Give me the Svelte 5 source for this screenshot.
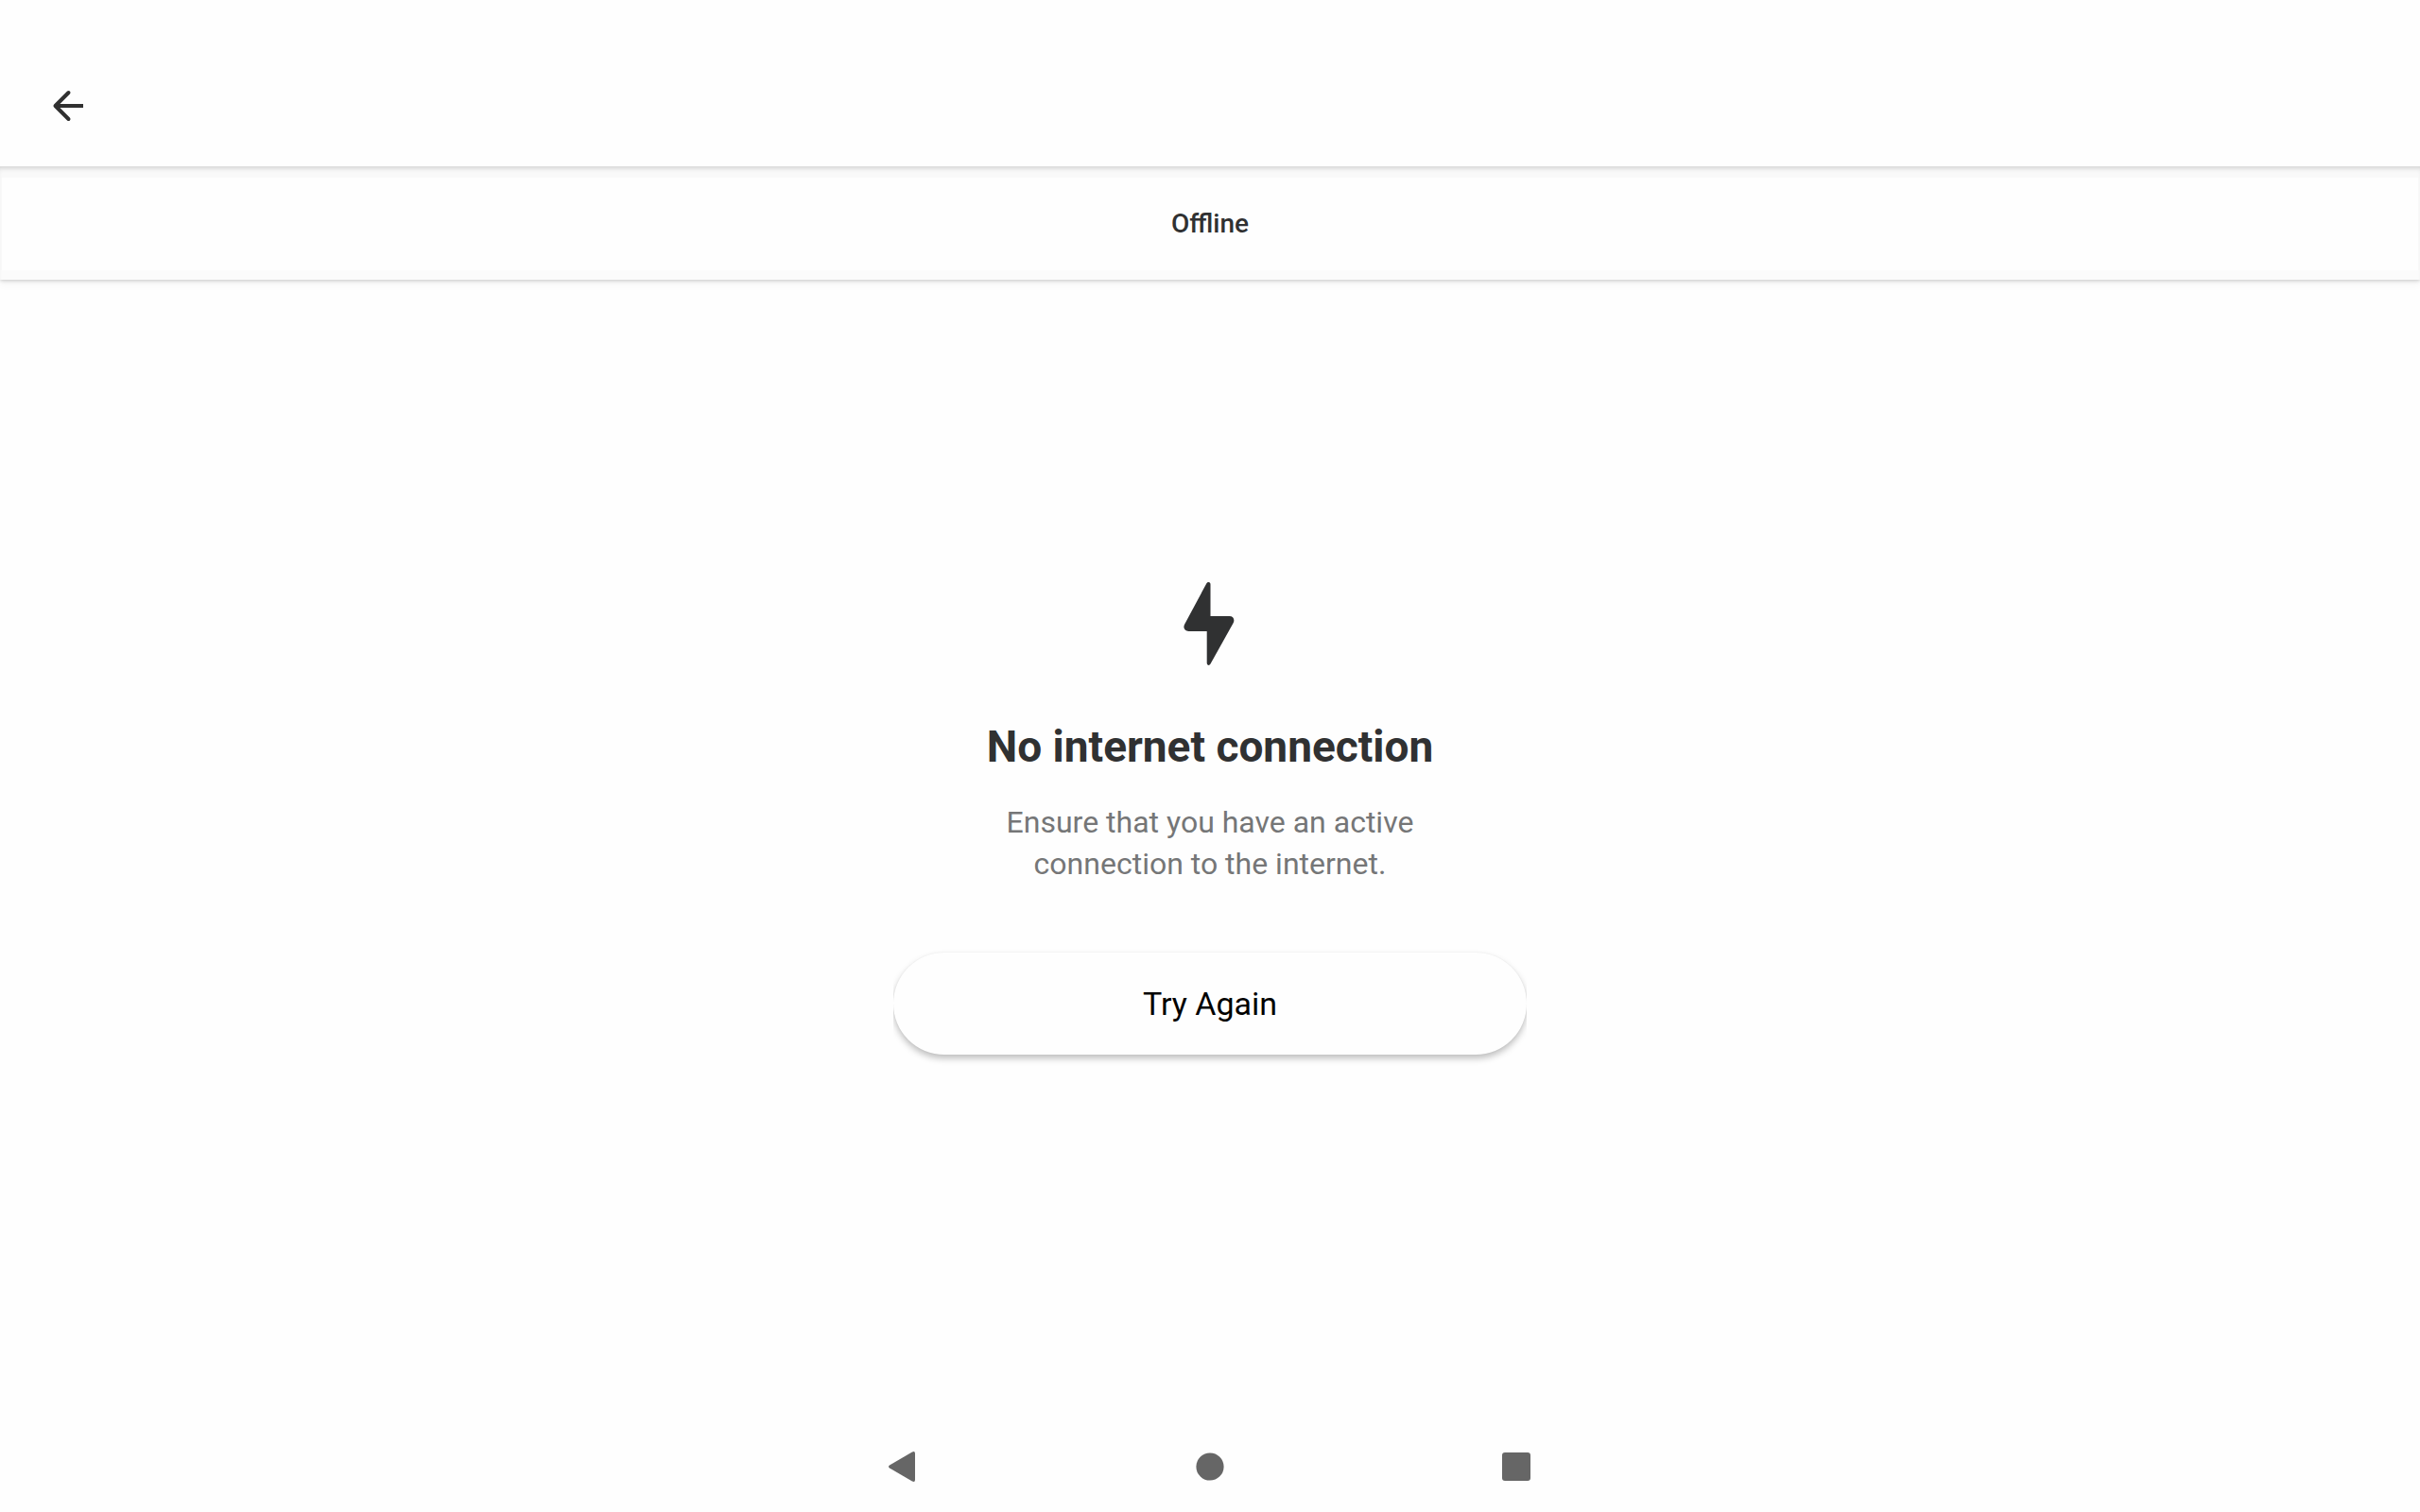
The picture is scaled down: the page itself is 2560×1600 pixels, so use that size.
<script>
  let { title = 'Offline' } = $props();
</script>

<div class="screen">
  <header class="toolbar">
    <button class="icon-button" type="button" aria-label="Back">
      <svg width="48" height="48" viewBox="0 0 48 48" fill="none" stroke="#303030" stroke-width="4">
        <path d="M40 24H11" />
        <path d="M24.500 10L10.500 24L24.500 38" stroke-linecap="round" stroke-linejoin="round" />
      </svg>
    </button>
  </header>

  <div class="banner">{title}</div>

  <main class="content">
    <svg class="bolt" width="56" height="88" viewBox="0 0 56 88" fill="#303132">
      <path d="M24.4 1.2C25.6 -.8 28.500 -.2 28.500 2.400V36H48.500C53 36 54.500 40 52.500 43.500L28.500 86.600C27.300 88.800 24.700 88 24.700 85.600V52H5.500C1 52 -.8 48 1.200 44.400Z" />
    </svg>
    <h1>No internet connection</h1>
    <p>Ensure that you have an active connection to the internet.</p>
    <div class="action">
      <button class="retry" type="button">Try Again</button>
    </div>
  </main>

  <nav class="system-bar">
    <button type="button" aria-label="System back">
      <svg width="32" height="32" viewBox="0 0 32 32" fill="#666">
        <path d="M25 .5Q28 -.8 28 2V30Q28 32.800 25 31.500L1 17.500Q-1 16 1 14.500Z" />
      </svg>
    </button>
    <button type="button" aria-label="Home">
      <svg width="32" height="32" viewBox="0 0 32 32" fill="#666">
        <circle cx="16" cy="16" r="14.6" />
      </svg>
    </button>
    <button type="button" aria-label="Recent apps">
      <svg width="32" height="32" viewBox="0 0 32 32" fill="#666">
        <rect x="1" y="1" width="30" height="30" rx="3" />
      </svg>
    </button>
  </nav>
</div>

<style>
  :global(body) {
    margin: 0;
    background: #fefefe;
  }

  .screen {
    display: flex;
    flex-direction: column;
    min-height: 100vh;
    font-family: Roboto, "Liberation Sans", sans-serif;
    color: #303132;
  }

  button {
    padding: 0;
    border: 0;
    background: none;
    font: inherit;
    cursor: pointer;
  }

  svg {
    display: block;
  }

  .toolbar {
    position: relative;
    z-index: 1;
    display: flex;
    height: 128px;
    padding: 48px 8px 0;
    align-items: center;
    background: #fefefe;
  }

  .icon-button {
    display: flex;
    align-items: center;
    justify-content: center;
    width: 128px;
    height: 128px;
  }

  .banner {
    display: flex;
    align-items: center;
    justify-content: center;
    height: 120px;
    font-size: 28px;
    font-weight: 500;
    /* shadow of the toolbar above, then the faint inner edge */
    box-shadow:
      inset 0 5px 5px -3px #d0d0d0,
      inset 0 12px 0 #f9f9f9,
      inset 0 -10px 0 #fbfbfb,
      inset 2px 0 0 #fafafa,
      inset -2px 0 0 #fafafa,
      0 1px 4px rgba(0, 0, 0, 0.2),
      0 6px 8px rgba(0, 0, 0, 0.03);
  }

  .content {
    display: flex;
    flex: 1;
    flex-direction: column;
    align-items: center;
    justify-content: center;
    padding-bottom: 68px;
    text-align: center;
  }

  h1 {
    margin: 56px 0 28px;
    font-size: 46px;
    font-weight: 700;
    line-height: 60px;
  }

  p {
    max-width: 480px;
    margin: 0;
    font-size: 32px;
    line-height: 44px;
    color: #757677;
  }

  .action {
    width: 670px;
    max-width: 100%;
    margin-top: 72px;
    /* the shadow is cut off at both sides */
    clip-path: inset(-24px 0);
  }

  .retry {
    display: block;
    width: 100%;
    height: 108px;
    border-radius: 54px;
    background: #fefefe;
    box-shadow:
      0 4px 7px rgba(0, 0, 0, 0.25),
      0 0 2px rgba(0, 0, 0, 0.05);
    font-size: 34px;
    color: #000;
  }

  .system-bar {
    display: flex;
    justify-content: center;
    gap: 228px;
    height: 96px;
  }

  .system-bar button {
    display: flex;
    align-items: center;
    justify-content: center;
    width: 96px;
  }
</style>
